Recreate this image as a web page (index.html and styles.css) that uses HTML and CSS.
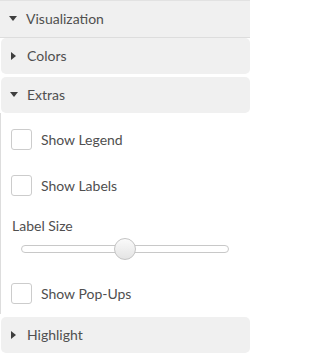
FILE: index.html
```html
<!DOCTYPE html>
<html>
<head>
<meta charset="utf-8">
<link rel="stylesheet" href="styles.css">
</head>
<body>
<div class="panel-list">
  <div class="header header-flat">
    <span class="tri tri-down"></span><span class="title">Visualization</span>
  </div>
  <div class="header header-round">
    <span class="tri tri-right"></span><span class="title">Colors</span>
  </div>
  <div class="header header-round header-gap">
    <span class="tri tri-down"></span><span class="title">Extras</span>
  </div>
  <div class="body">
    <label class="check first">
      <span class="box"></span><span class="check-text">Show Legend</span>
    </label>
    <label class="check second">
      <span class="box"></span><span class="check-text">Show Labels</span>
    </label>
    <div class="field-label">Label Size</div>
    <div class="slider">
      <div class="track"></div>
      <div class="handle"></div>
    </div>
    <label class="check third">
      <span class="box"></span><span class="check-text">Show Pop-Ups</span>
    </label>
  </div>
  <div class="header header-round header-gap">
    <span class="tri tri-right"></span><span class="title">Highlight</span>
  </div>
</div>
</body>
</html>
```
FILE: styles.css
```css
html, body {
  margin: 0;
  padding: 0;
  background: #ffffff;
}
body {
  font-family: Lato, "Open Sans", sans-serif;
  font-size: 14px;
  color: #4f4f4f;
  width: 250px;
  overflow: hidden;
}
.panel-list {
  display: flex;
  flex-direction: column;
}
.header {
  display: flex;
  align-items: center;
  background: #f0f0f0;
  box-sizing: border-box;
}
.header-flat {
  height: 38px;
  border-top: 1px solid #e2e2e2;
  border-bottom: 1px solid #dddddd;
}
.header-round {
  height: 36px;
  margin-left: 1px;
  border-radius: 5px;
}
.header-gap {
  margin-top: 3px;
}
.tri {
  width: 0;
  height: 0;
  flex: none;
}
.tri-down {
  margin-left: 9px;
  margin-right: 9px;
  margin-top: -1px;
  border-left: 4px solid transparent;
  border-right: 4px solid transparent;
  border-top: 5px solid #3f3f3f;
}
.tri-right {
  margin-left: 10px;
  margin-right: 11px;
  border-top: 4px solid transparent;
  border-bottom: 4px solid transparent;
  border-left: 5px solid #3f3f3f;
}
.title {
  line-height: 20px;
}
.body {
  border-left: 1px solid #dddddd;
  padding: 16px 0 10px 10px;
  display: flex;
  flex-direction: column;
}
.check {
  display: flex;
  align-items: center;
  height: 21px;
}
.second {
  margin-top: 25px;
}
.third {
  margin-top: 23px;
}
.box {
  width: 21px;
  height: 21px;
  box-sizing: border-box;
  border: 1px solid #cccccc;
  border-radius: 3px;
  background: #ffffff;
  flex: none;
}
.check-text {
  margin-left: 9px;
  line-height: 20px;
}
.field-label {
  margin-top: 20px;
  margin-left: 1px;
  line-height: 20px;
}
.slider {
  position: relative;
  margin-top: 2px;
  height: 22px;
}
.track {
  position: absolute;
  left: 10px;
  width: 208px;
  top: 7px;
  height: 8px;
  box-sizing: border-box;
  border: 1px solid #c8c8c8;
  border-radius: 4px;
  background: #ffffff;
}
.handle {
  position: absolute;
  left: 103px;
  top: 0;
  width: 22px;
  height: 22px;
  box-sizing: border-box;
  border: 1px solid #c4c4c4;
  border-radius: 50%;
  background: linear-gradient(#fafafa, #e4e4e4);
}
```
